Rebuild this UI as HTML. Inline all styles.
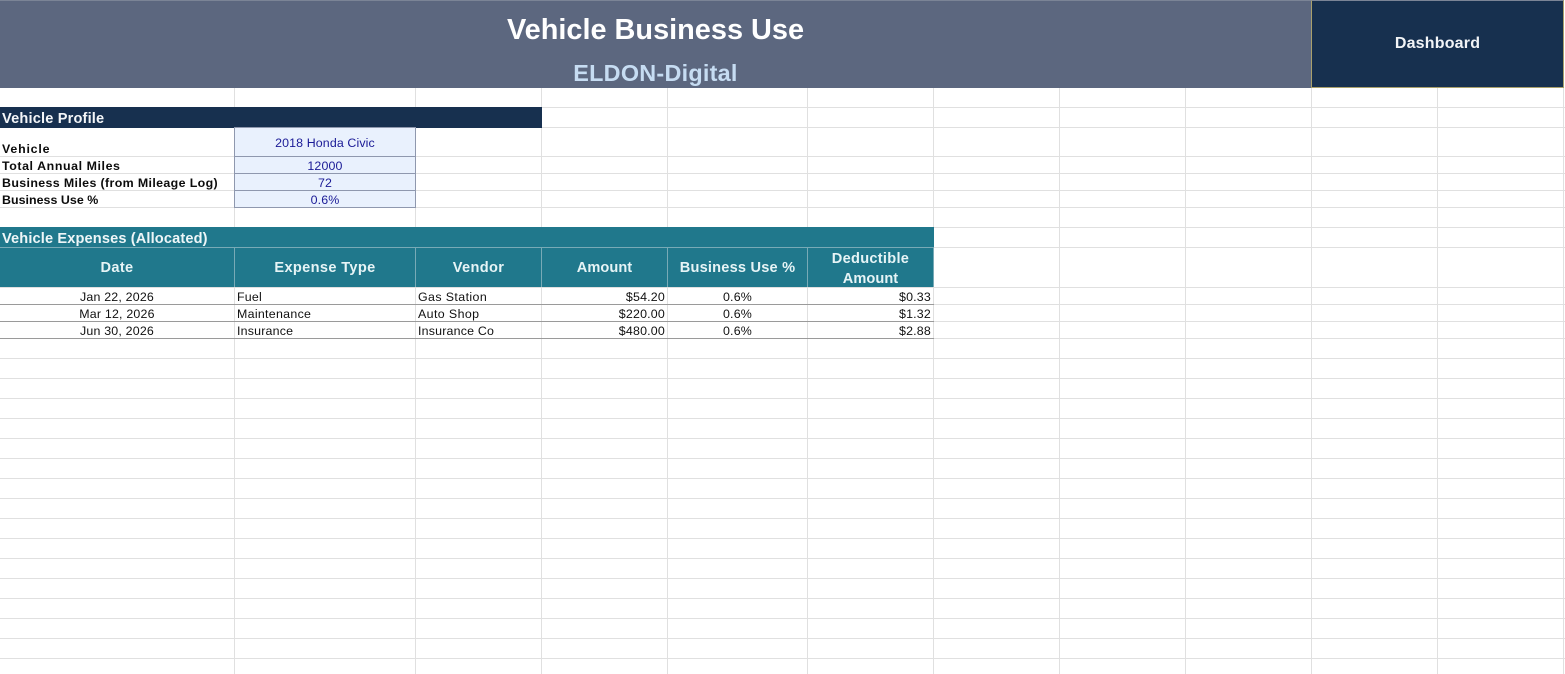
<!DOCTYPE html>
<html><head><meta charset="utf-8"><title>Vehicle Business Use</title>
<style>
html,body{margin:0;padding:0;background:#fff}
#s{position:relative;width:1565px;height:674px;overflow:hidden;background:#fff;font-family:"Liberation Sans",Arial,sans-serif;color:#111}
#s div{position:absolute;box-sizing:border-box}
.v{width:1px;top:88px;height:586px;background:#e0e0e0}
.h{left:0;width:1565px;height:1px;background:#e0e0e0}
.t{white-space:nowrap;font-size:12.4px;line-height:17px;height:17px;letter-spacing:.2px}
.c{text-align:center}
.r{text-align:right}
.b{font-weight:bold;color:#0c0c0c}
.in{left:234px;width:182px;background:#e9f1fd;text-align:center;color:#1a1a96;border:1px solid #8f98ae;border-width:0 1px 1px 1px;font-size:12.4px;letter-spacing:.15px;white-space:nowrap}
.th{top:248px;height:39px;background:#20788c;color:#e6f4f6;font-weight:bold;font-size:14.6px;text-align:center;line-height:39px;letter-spacing:.35px;border-right:1px solid #78aab6;white-space:nowrap}
.g{left:0;width:934px;height:1px;background:#9a9a9a}
</style></head><body>
<div id="s">
<div class="h" style="top:107px"></div><div class="h" style="top:127px"></div><div class="h" style="top:156px"></div><div class="h" style="top:173px"></div><div class="h" style="top:190px"></div><div class="h" style="top:207px"></div><div class="h" style="top:227px"></div><div class="h" style="top:247px"></div><div class="h" style="top:287px"></div><div class="h" style="top:304px"></div><div class="h" style="top:321px"></div><div class="h" style="top:338px"></div><div class="h" style="top:358px"></div><div class="h" style="top:378px"></div><div class="h" style="top:398px"></div><div class="h" style="top:418px"></div><div class="h" style="top:438px"></div><div class="h" style="top:458px"></div><div class="h" style="top:478px"></div><div class="h" style="top:498px"></div><div class="h" style="top:518px"></div><div class="h" style="top:538px"></div><div class="h" style="top:558px"></div><div class="h" style="top:578px"></div><div class="h" style="top:598px"></div><div class="h" style="top:618px"></div><div class="h" style="top:638px"></div><div class="h" style="top:658px"></div>
<div class="v" style="left:234px"></div><div class="v" style="left:415px"></div><div class="v" style="left:541px"></div><div class="v" style="left:667px"></div><div class="v" style="left:807px"></div><div class="v" style="left:933px"></div><div class="v" style="left:1059px"></div><div class="v" style="left:1185px"></div><div class="v" style="left:1311px"></div><div class="v" style="left:1437px"></div><div class="v" style="left:1563px"></div>

<!-- banner -->
<div style="left:0;top:0;width:1311px;height:88px;background:#5c677f;border-top:1px solid #7b8496"></div>
<div style="left:0;top:12px;width:1311px;text-align:center;color:#fff;font-weight:bold;font-size:28.9px;line-height:36px;white-space:nowrap">Vehicle Business Use</div>
<div style="left:0;top:58px;width:1311px;text-align:center;color:#c6dcf2;font-weight:bold;font-size:23.4px;line-height:30px;white-space:nowrap;letter-spacing:.25px">ELDON-Digital</div>
<div style="left:1311px;top:0;width:253px;height:88px;background:#17304f;border:1px solid #a9a06c;border-top-color:#7b8496;color:#f2f4f7;font-weight:bold;font-size:16px;text-align:center;line-height:86px;white-space:nowrap;letter-spacing:.2px">Dashboard</div>

<!-- profile -->
<div style="left:0;top:107px;width:542px;height:21px;background:#17304f"></div>
<div style="left:2px;top:110px;color:#f4f6f8;font-weight:bold;font-size:14.6px;line-height:18px;white-space:nowrap;letter-spacing:.17px">Vehicle Profile</div>
<div class="in" style="top:127px;height:30px;line-height:29px;border-top-width:1px;padding-top:1px;letter-spacing:.12px">2018 Honda Civic</div>
<div class="in" style="top:157px;height:17px;line-height:18px">12000</div>
<div class="in" style="top:174px;height:17px;line-height:18px">72</div>
<div class="in" style="top:191px;height:17px;line-height:18px">0.6%</div>
<div class="t b" style="left:2px;top:141px;letter-spacing:.8px">Vehicle</div>
<div class="t b" style="left:2px;top:158px;letter-spacing:.58px">Total Annual Miles</div>
<div class="t b" style="left:2px;top:175px;letter-spacing:.37px">Business Miles (from Mileage Log)</div>
<div class="t b" style="left:2px;top:192px;letter-spacing:.04px">Business Use %</div>

<!-- expenses -->
<div style="left:0;top:227px;width:934px;height:21px;background:#20788c"></div>
<div style="left:2px;top:230px;color:#eef6f8;font-weight:bold;font-size:14.6px;line-height:18px;white-space:nowrap;letter-spacing:.13px">Vehicle Expenses (Allocated)</div>
<div style="left:0;top:247px;width:934px;height:1px;background:#78aab6"></div>
<div class="th" style="left:0;width:235px;padding-top:1px">Date</div>
<div class="th" style="left:235px;width:181px;padding-top:1px">Expense Type</div>
<div class="th" style="left:416px;width:126px;padding-top:1px">Vendor</div>
<div class="th" style="left:542px;width:126px;padding-top:1px;letter-spacing:.05px">Amount</div>
<div class="th" style="left:668px;width:140px;padding-top:1px;letter-spacing:.2px">Business Use %</div>
<div class="th" style="left:808px;width:126px;line-height:20px;white-space:normal;padding:1px 10px 0;letter-spacing:.28px">Deductible <span style="letter-spacing:.05px">Amount</span></div>

<div class="g" style="top:304px"></div><div class="g" style="top:321px"></div><div class="g" style="top:338px"></div>

<div class="t c" style="left:0;top:289px;width:234px">Jan 22, 2026</div>
<div class="t" style="left:237px;top:289px">Fuel</div>
<div class="t" style="left:418px;top:289px;letter-spacing:.4px">Gas Station</div>
<div class="t r" style="left:542px;top:289px;width:123px">$54.20</div>
<div class="t c" style="left:668px;top:289px;width:139px">0.6%</div>
<div class="t r" style="left:808px;top:289px;width:123px">$0.33</div>

<div class="t c" style="left:0;top:306px;width:234px">Mar 12, 2026</div>
<div class="t" style="left:237px;top:306px;letter-spacing:.3px">Maintenance</div>
<div class="t" style="left:418px;top:306px;letter-spacing:.4px">Auto Shop</div>
<div class="t r" style="left:542px;top:306px;width:123px">$220.00</div>
<div class="t c" style="left:668px;top:306px;width:139px">0.6%</div>
<div class="t r" style="left:808px;top:306px;width:123px">$1.32</div>

<div class="t c" style="left:0;top:323px;width:234px">Jun 30, 2026</div>
<div class="t" style="left:237px;top:323px">Insurance</div>
<div class="t" style="left:418px;top:323px">Insurance Co</div>
<div class="t r" style="left:542px;top:323px;width:123px">$480.00</div>
<div class="t c" style="left:668px;top:323px;width:139px">0.6%</div>
<div class="t r" style="left:808px;top:323px;width:123px">$2.88</div>
</div>
</body></html>
